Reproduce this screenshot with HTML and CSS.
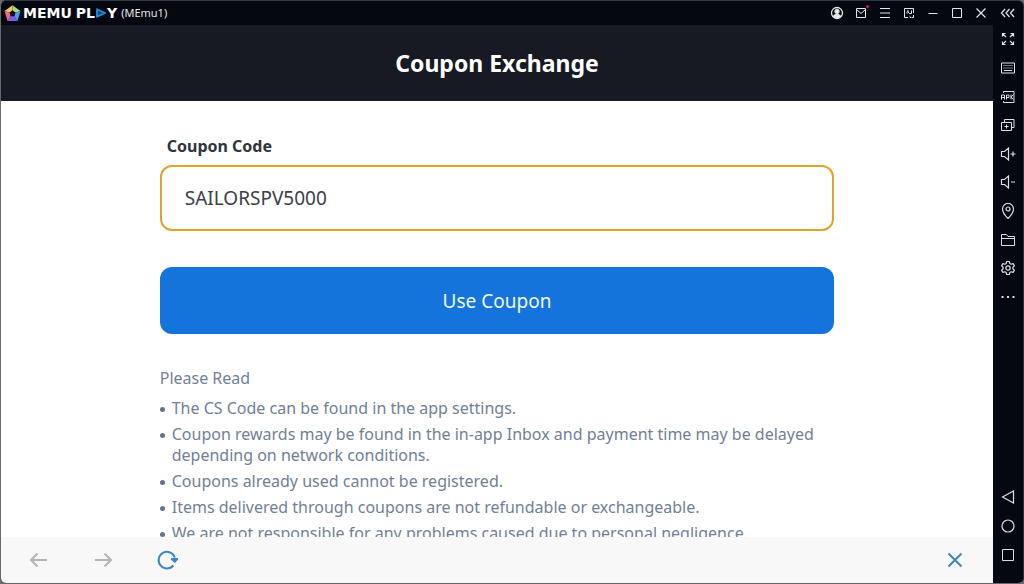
FILE: index.html
```html
<!DOCTYPE html>
<html lang="en">
<head>
<meta charset="utf-8">
<title>MEMU PLAY (MEmu1)</title>
<link rel="stylesheet" href="styles.css">
</head>
<body>
<div class="window">
  <div class="main">
    <header class="titlebar">
      <svg class="logo-mark" viewBox="0 0 17 17" aria-hidden="true">
        <path d="M8.500 8.500 .5 6 8.500 .3z" fill="#f4c25a"/>
        <path d="M8.500 8.500 8.500 .3 16.500 6z" fill="#a9dc72"/>
        <path d="M8.500 8.500 16.500 6 13.500 16z" fill="#459fec"/>
        <path d="M8.500 8.500 13.500 16 3.500 16z" fill="#7b5ee6"/>
        <path d="M8.500 8.500 3.500 16 .5 6z" fill="#ee6a86"/>
        <path d="M8.500 5.300 11.500 7.600 10.400 11.200H6.600L5.500 7.600z" fill="#080b12"/>
      </svg>
      <span class="brand">MEMU</span>
      <span class="brand">PL<svg class="brand-a" viewBox="0 0 11 10" aria-hidden="true"><path d="M1.500 1.200 9.500 5 1.500 8.800z" fill="#0b4a86" stroke="#2390dd" stroke-width="1.800" stroke-linejoin="round"/></svg>Y</span>
      <span class="instance">(MEmu1)</span>
      <div class="window-actions">
        <button class="icon-btn" aria-label="Account"><svg viewBox="0 0 14 14"><circle cx="7" cy="7" r="5.500" stroke-width="1.300"/><circle cx="7" cy="5.400" r="2.200" fill="currentColor"/><path d="M3 10.500Q4 8.300 7 8.300T11 10.500Q9.500 12.300 7 12.300T3 10.500z" fill="currentColor"/></svg></button>
        <button class="icon-btn mail" aria-label="Messages"><svg viewBox="0 0 14 14"><path d="M2.500 2.500h9v9h-9zM2.500 3.500 7 7.500l4.500-4"/></svg></button>
        <button class="icon-btn" aria-label="Menu"><svg viewBox="0 0 14 14"><path d="M2 2.500h10M2 7h10M2 11.500h10"/></svg></button>
        <button class="icon-btn" aria-label="Resize window"><svg viewBox="0 0 14 14"><path d="M6 11.500H2.500v-9h9V7"/><path d="M5 7.500V5.500M5 5h2M5.500 5.500 8 8M9.500 4.500v3h-2"/><path d="M8 10.500v1h1M11.500 9v2.500h-2"/></svg></button>
        <button class="icon-btn" aria-label="Minimize"><svg viewBox="0 0 14 14"><path d="M2.500 7.500h9"/></svg></button>
        <button class="icon-btn" aria-label="Maximize"><svg viewBox="0 0 14 14"><path d="M2.500 2.500h9v9h-9z"/></svg></button>
        <button class="icon-btn" aria-label="Close window"><svg viewBox="0 0 14 14"><path d="M2.500 2.500l9 9M11.500 2.500l-9 9" stroke-width="1.200"/></svg></button>
      </div>
    </header>

    <div class="page-head"><h1 class="page-title">Coupon Exchange</h1></div>

    <main class="page">
      <form class="column">
        <label class="field-label" for="code">Coupon Code</label>
        <input class="field" id="code" type="text" value="SAILORSPV5000">
        <button class="submit" type="button">Use Coupon</button>
        <h2 class="notes-title">Please Read</h2>
        <ul class="notes">
          <li class="note">The CS Code can be found in the app settings.</li>
          <li class="note">Coupon rewards may be found in the in-app Inbox and payment time may be delayed depending on network conditions.</li>
          <li class="note">Coupons already used cannot be registered.</li>
          <li class="note">Items delivered through coupons are not refundable or exchangeable.</li>
          <li class="note">We are not responsible for any problems caused due to personal negligence.</li>
        </ul>
      </form>
    </main>

    <footer class="browser-bar">
      <button class="nav-btn" aria-label="Back"><svg viewBox="0 0 24 24"><path d="M20 12H4M10.500 5.500 4 12l6.500 6.500"/></svg></button>
      <button class="nav-btn" aria-label="Forward"><svg viewBox="0 0 24 24"><path d="M4 12h16M13.500 5.500 20 12l-6.500 6.500"/></svg></button>
      <button class="nav-btn active" aria-label="Reload"><svg viewBox="0 0 24 24"><path d="M18.300 17.500A8.300 8.300 0 1 1 19.800 9.500"/><path d="M16.800 11h5.400l-2.500 2.700z" fill="currentColor" stroke-linejoin="round"/></svg></button>
      <button class="nav-btn active close" aria-label="Close page"><svg viewBox="0 0 24 24"><path d="M5.500 5.500l13 13M18.500 5.500l-13 13"/></svg></button>
    </footer>
  </div>

  <aside class="sidebar">
    <button class="tool collapse" aria-label="Collapse sidebar"><svg viewBox="0 0 16 16"><path d="M5 4 1.500 8 5 12M9.500 4 6 8l3.500 4M14 4l-3.500 4 3.500 4" stroke-width="1.300"/></svg></button>
    <button class="tool" aria-label="Full screen"><svg viewBox="0 0 16 16"><path d="M2.500 5.500v-3h3M2.500 2.500 6 6M10.500 2.500h3v3M13.500 2.500 10 6M2.500 10.500v3h3M2.500 13.500 6 10M10.500 13.500h3v-3M13.500 13.500 10 10" stroke-width="1.200"/></svg></button>
    <button class="tool" aria-label="Keyboard"><svg viewBox="0 0 16 16"><path d="M1.500 3h13v10h-13z"/><path d="M3.500 5.500h9M3.500 8h9" stroke-dasharray="1 1"/><path d="M4 10.500h8"/></svg></button>
    <button class="tool" aria-label="Install APK"><svg viewBox="0 0 16 16"><path d="M3.500 4V2.500h10.500v11H3.500V12"/><path d="M1.500 10.500V6h3v4.500M1.500 8.500h3M6.500 10.500V6h2.500v2.500h-2.500M11 5.500v5M13.500 5.500l-2.500 2.700 2.500 2.300"/></svg></button>
    <button class="tool" aria-label="Multiple instances"><svg viewBox="0 0 16 16"><path d="M1.500 5.500h10v8h-10zM4.500 5.500v-3h9.500v8h-2.500M6.500 7.500v4M4.500 9.500h4"/></svg></button>
    <button class="tool" aria-label="Volume up"><svg viewBox="0 0 16 16"><path d="M1.500 5.500h3l4-3.500v12l-4-3.500h-3zM10.500 8h5M13 5.500v5" stroke-width="1.200"/></svg></button>
    <button class="tool" aria-label="Volume down"><svg viewBox="0 0 16 16"><path d="M1.500 5.500h3l4-3.500v12l-4-3.500h-3zM11 8h4" stroke-width="1.200"/></svg></button>
    <button class="tool" aria-label="Location"><svg viewBox="0 0 16 16"><path d="M8 15.500Q2.500 10 2.500 6a5.500 5.500 0 0 1 11 0Q13.500 10 8 15.500z" stroke-width="1.200"/><circle cx="8" cy="6" r="2" stroke-width="1.200"/></svg></button>
    <button class="tool" aria-label="Shared folder"><svg viewBox="0 0 16 16"><path d="M1.500 13.500v-11h5l1.500 2h6.500v9zM1.500 6.500h13"/></svg></button>
    <button class="tool" aria-label="Settings"><svg viewBox="0 0 16 16"><path d="M6.700 1.500h2.600l.5 2 1.300.7 2-.6 1.300 2.300-1.500 1.400v1.400l1.500 1.400-1.300 2.300-2-.6-1.300.7-.5 2H6.700l-.5-2-1.300-.7-2 .6-1.300-2.300 1.500-1.400V7.300L1.600 5.900l1.300-2.300 2 .6 1.300-.7z" stroke-linejoin="round" stroke-width="1.200"/><circle cx="8" cy="8" r="2.200" stroke-width="1.200"/></svg></button>
    <button class="tool" aria-label="More"><svg viewBox="0 0 16 16"><path d="M1.500 8h2M7 8h2M12.500 8h2" stroke-width="2"/></svg></button>
    <span class="tool-space"></span>
    <button class="tool" aria-label="Android back"><svg viewBox="0 0 16 16"><path d="M13.500 2v12L2.500 8z" stroke-width="1.200"/></svg></button>
    <button class="tool" aria-label="Android home"><svg viewBox="0 0 16 16"><circle cx="8" cy="8" r="6" stroke-width="1.200"/></svg></button>
    <button class="tool" aria-label="Recent apps"><svg viewBox="0 0 16 16"><path d="M2.500 2.500h11v11h-11z"/></svg></button>
  </aside>
</div>
</body>
</html>
```
FILE: styles.css
```css
* {
  box-sizing: border-box;
}

body {
  margin: 0;
  background: #6f6c70;
  font-family: "Noto Sans", "Open Sans", sans-serif;
}

button {
  margin: 0;
  padding: 0;
  border: 0;
  background: none;
  color: inherit;
  font: inherit;
}

svg {
  display: block;
  fill: none;
  stroke: currentColor;
}

.window {
  display: flex;
  height: 100vh;
  border: 1px solid #6b686c;
  border-top-color: #34373d;
  border-right-color: #2b2d36;
  border-radius: 6px;
  overflow: hidden;
  background: #050810;
}

.main {
  flex: 1;
  min-width: 0;
  display: flex;
  flex-direction: column;
}

.titlebar {
  flex: none;
  display: flex;
  align-items: center;
  height: 24px;
  padding-left: 3px;
  color: #e4e6ea;
}

.logo-mark {
  width: 17px;
  height: 17px;
  margin-right: 2px;
  stroke: none;
}

.brand {
  display: flex;
  align-items: center;
  margin-right: 4px;
  color: #fff;
  font: bold 14px/16px "DejaVu Sans", sans-serif;
}

.brand-a {
  width: 12px;
  height: 10px;
}

.instance {
  font-size: 11px;
  line-height: 16px;
}

.window-actions {
  display: flex;
  margin-left: auto;
}

.icon-btn {
  position: relative;
  display: grid;
  place-items: center;
  width: 24px;
  height: 24px;
}

.icon-btn svg {
  width: 14px;
  height: 14px;
}

.mail::after {
  content: "";
  position: absolute;
  top: 4px;
  right: 4px;
  width: 3px;
  height: 3px;
  border-radius: 50%;
  background: #d01c50;
}

.page-head {
  flex: none;
  padding: 22px 0;
  background: #171a23;
}

.page-title {
  margin: 0;
  color: #fff;
  font-size: 23px;
  line-height: 32px;
  font-weight: 700;
  text-align: center;
}

.page {
  flex: 1;
  min-height: 0;
  overflow: hidden;
  padding-top: 34px;
  background: #fff;
}

.column {
  display: flex;
  flex-direction: column;
  width: 68%;
  margin: 0 auto;
}

.field-label {
  padding-left: 7px;
  color: #30343b;
  font-size: 16px;
  line-height: 22px;
  font-weight: 700;
}

.field {
  width: 100%;
  height: 66px;
  margin-top: 8px;
  padding: 0 23px;
  border: 2px solid #dca52c;
  border-radius: 12px;
  outline: 0;
  background: #fff;
  color: #3c4047;
  font: 19px/24px "Noto Sans", "Open Sans", sans-serif;
}

.submit {
  height: 67px;
  margin-top: 36px;
  border-radius: 12px;
  background: #1474dc;
  color: #f2f8ff;
  font-size: 19px;
  line-height: 24px;
}

.notes-title {
  margin: 34px 0 0;
  color: #718096;
  font-size: 16px;
  line-height: 21px;
  font-weight: 400;
}

.notes {
  display: flex;
  flex-direction: column;
  gap: 5px;
  margin: 9px 0 0;
  padding: 0;
  list-style: none;
  color: #718096;
  font-size: 16px;
  line-height: 21px;
}

.note {
  display: flex;
  gap: 7px;
}

.note::before {
  content: "";
  flex: none;
  width: 5px;
  height: 5px;
  margin-top: 9px;
  border-radius: 50%;
  background: #64738a;
}

.browser-bar {
  flex: none;
  display: flex;
  align-items: center;
  gap: 40px;
  height: 46px;
  padding: 0 26px;
  background: #f8f8f8;
  color: #b4b4b4;
}

.nav-btn svg {
  width: 24px;
  height: 24px;
  stroke-width: 2;
}

.active {
  color: #3d85c8;
}

.close {
  margin-left: auto;
}

.sidebar {
  flex: none;
  display: flex;
  flex-direction: column;
  width: 30px;
  padding-bottom: 14px;
  color: #dcdfe4;
}

.tool {
  flex: 1;
  display: grid;
  place-items: center;
}

.tool svg {
  width: 16px;
  height: 16px;
}

.collapse {
  flex: none;
  height: 24px;
}

.tool-space {
  flex: 6;
}
```
